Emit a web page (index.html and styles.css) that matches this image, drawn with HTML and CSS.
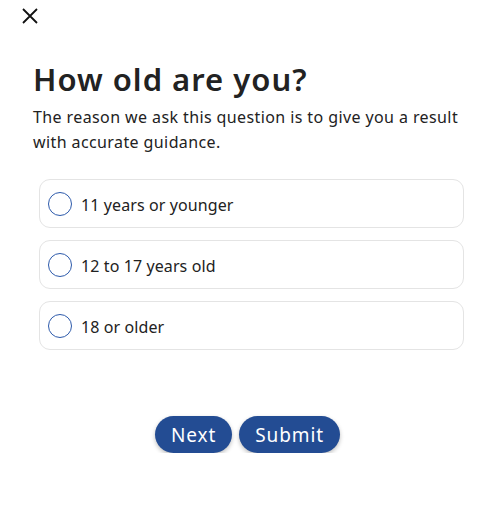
FILE: index.html
```html
<!DOCTYPE html>
<html lang="en">
<head>
<meta charset="utf-8">
<title>How old are you?</title>
<link rel="stylesheet" href="styles.css">
</head>
<body>
<div class="page">
  <header class="topbar">
    <button class="close" aria-label="Close">
      <svg width="16" height="16" viewBox="0 0 16 16"><path d="M1 1L15 15M15 1L1 15" stroke="#111" stroke-width="1.8" fill="none"/></svg>
    </button>
  </header>
  <main class="content">
    <h1 class="title">How old are you?</h1>
    <p class="lead">The reason we ask this question is to give you a result with accurate guidance.</p>
    <div class="options">
      <label class="option"><span class="radio"></span><span class="option-text">11 years or younger</span></label>
      <label class="option"><span class="radio"></span><span class="option-text">12 to 17 years old</span></label>
      <label class="option"><span class="radio"></span><span class="option-text">18 or older</span></label>
    </div>
    <div class="actions">
      <button class="btn">Next</button>
      <button class="btn">Submit</button>
    </div>
  </main>
</div>
</body>
</html>
```
FILE: styles.css
```css
* { box-sizing: border-box; }
html, body { margin: 0; padding: 0; background: #fff; }
body {
  font-family: "Noto Sans", "DejaVu Sans", sans-serif;
  color: #222;
}
.page { width: 503px; }
.topbar { padding: 7px 0 0 21px; height: 30px; }
.close {
  border: 0; background: none; padding: 0; margin: 0;
  width: 18px; height: 18px; display: flex; align-items: center; justify-content: center;
  cursor: pointer;
}
.content { padding: 0 33px; }
.title {
  margin: 29px 0 0;
  font-size: 31px;
  font-weight: 600;
  line-height: 40px;
  color: #222;
  letter-spacing: 1px;
}
.lead {
  margin: 6px 0 0;
  font-size: 16px;
  line-height: 25px;
  color: #222;
  letter-spacing: 0.4px;
}
.options {
  margin: 24px 6px 0 6px;
  display: flex;
  flex-direction: column;
  gap: 12px;
}
.option {
  display: flex;
  align-items: center;
  gap: 9px;
  height: 49px;
  padding: 0 8px;
  border: 1px solid #e4e4e4;
  border-radius: 11px;
  background: #fff;
}
.radio {
  width: 24px; height: 24px;
  border-radius: 50%;
  border: 1.5px solid #2d5aab;
  flex: none;
}
.option-text { font-size: 16px; color: #222; letter-spacing: 0.1px; padding-top: 3px; }
.actions {
  margin-top: 66px;
  display: flex;
  justify-content: center;
  gap: 7px;
  padding-right: 8px;
}
.btn {
  font-family: inherit;
  font-size: 19px;
  letter-spacing: 0.9px;
  color: #fff;
  background: #234c93;
  border: 0;
  border-radius: 19px;
  height: 37px;
  padding: 0 16px;
  box-shadow: 0 2px 4px rgba(0,0,0,0.25);
}
```
